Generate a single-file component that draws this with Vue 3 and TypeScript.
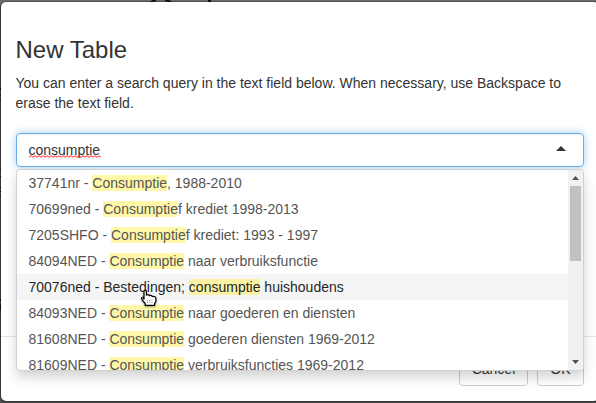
<script setup lang="ts">
import { ref } from 'vue'

interface Option {
  before: string
  match: string
  after: string
}

const query = ref('consumptie')
const active = ref(4)
const options: Option[] = [
  { before: '37741nr - ', match: 'Consumptie', after: ', 1988-2010' },
  { before: '70699ned - ', match: 'Consumptie', after: 'f krediet 1998-2013' },
  { before: '7205SHFO - ', match: 'Consumptie', after: 'f krediet: 1993 - 1997' },
  { before: '84094NED - ', match: 'Consumptie', after: ' naar verbruiksfunctie' },
  { before: '70076ned - Bestedingen; ', match: 'consumptie', after: ' huishoudens' },
  { before: '84093NED - ', match: 'Consumptie', after: ' naar goederen en diensten' },
  { before: '81608NED - ', match: 'Consumptie', after: ' goederen diensten 1969-2012' },
  { before: '81609NED - ', match: 'Consumptie', after: ' verbruiksfuncties 1969-2012' },
]
</script>

<template>
  <div class="page">
    <svg class="behind" width="596" height="403" aria-hidden="true">
      <path d="M151 2.5Q153 .5 156 0M165 0Q169 .5 171 2.5" fill="none" stroke="#111" stroke-width="2" />
      <path d="M208 0h3v2h-3zM0 88h1v2H0zM0 95h1v1H0zM0 99h1v1H0zM0 169h1v1H0zM0 176h1v1H0zM0 187h1v1H0zM0 191h1v1H0zM0 196h1v1H0zM0 299h1v2H0zM0 304h1v7H0z" fill="#111" />
    </svg>
    <div class="modal">
      <div class="body">
        <h3>New Table</h3>
        <p>You can enter a search query in the text field below. When necessary, use Backspace to erase the text field.</p>
        <div class="select">
          <div class="control">
            <span class="query">{{ query }}<svg class="spelling" width="72" height="3" aria-hidden="true">
              <defs>
                <pattern id="wave" width="4" height="3" patternUnits="userSpaceOnUse">
                  <path d="M0 2.3L2 .7L4 2.3" fill="none" stroke="#f22" stroke-width="1" />
                </pattern>
              </defs>
              <rect width="72" height="3" fill="url(#wave)" />
            </svg></span>
            <i class="caret"></i>
          </div>
          <div class="dropdown">
            <div class="options">
              <div v-for="(o, i) in options" :key="i" class="option" :class="{ active: i === active }" @mouseenter="active = i">{{ o.before }}<span class="highlight">{{ o.match }}</span>{{ o.after }}</div>
            </div>
            <div class="scrollbar">
              <svg width="15" height="16"><path d="M4 10L7.5 6L11 10Z" fill="#505050" /></svg>
              <div class="thumb"></div>
              <svg class="down" width="15" height="16"><path d="M4 6L7.5 10L11 6Z" fill="#505050" /></svg>
            </div>
          </div>
        </div>
      </div>
      <div class="footer">
        <button type="button">Cancel</button>
        <button type="button">OK</button>
      </div>
    </div>
    <svg class="pointer" width="18" height="20" viewBox="0 0 18 20" aria-hidden="true">
      <path d="M4 10.5V2.6Q4 1.3 5.2 1.3T6.4 2.6V6Q8.6 5 9.4 6.6Q11.4 5.9 12.3 7.5Q15.9 7 15.9 9.6V12.5L14.6 14.5V16.4H5.2V14.5L3 12L1.6 9.9Q1.5 7.9 3.2 8.3Z" fill="#fff" stroke="#000" stroke-width="1.2" />
      <path d="M7.5 11v3M9.7 11v3M11.9 11v3" stroke="#777" stroke-width=".8" stroke-dasharray="1 1" />
    </svg>
  </div>
</template>

<style>
body {
  overflow: hidden;
}
</style>

<style scoped>
* {
  box-sizing: border-box;
}
.page {
  position: relative;
  width: 596px;
  height: 403px;
  overflow: hidden;
  padding-top: 1px;
  background: linear-gradient(#6c6a6c, #6c6a6c 3px, #4b494b 8px);
  font: 14px/20px "Liberation Sans", Arial, sans-serif;
  color: #333;
}
.behind {
  position: absolute;
  top: 0;
  left: 0;
}
.modal {
  position: relative;
  width: 600px;
  height: 401px;
  margin-left: -0.5px;
  border: 1px solid rgba(0, 0, 0, 0.25);
  border-radius: 6px;
  background: #fff;
  background-clip: padding-box;
}
.body {
  height: 334px;
  padding: 35px 15px 0;
}
h3 {
  margin: 0 0 10px;
  font-size: 24px;
  line-height: 26px;
  font-weight: 400;
}
p {
  margin: 0 0 20px;
}
.select {
  position: relative;
}
.control {
  display: flex;
  align-items: center;
  justify-content: space-between;
  height: 34px;
  padding: 0 17px 0 12px;
  border: 1px solid #66afe9;
  border-radius: 4px;
  background: #fff;
  box-shadow: inset 0 1px 1px rgba(0, 0, 0, 0.075), 0 0 8px rgba(102, 175, 233, 0.6);
}
.query {
  position: relative;
}
.spelling {
  position: absolute;
  left: 0;
  bottom: 2px;
}
.caret {
  margin-bottom: 4px;
  border: 5px solid transparent;
  border-top: 0;
  border-bottom-color: #333;
}
.dropdown {
  position: absolute;
  z-index: 1;
  top: 36px;
  left: 0;
  display: flex;
  width: 568px;
  height: 202px;
  overflow: hidden;
  border: 1px solid #d0d0d0;
  border-radius: 4px;
  background: #fff;
  box-shadow: 0 6px 12px rgba(0, 0, 0, 0.175);
}
.options {
  flex: 1;
  overflow: hidden;
}
.option {
  height: 26px;
  padding: 3px 12px;
  color: #555;
  white-space: nowrap;
}
.option.active {
  background: #f5f5f5;
  color: #262626;
}
.highlight {
  border-radius: 1px;
  background: rgba(255, 237, 40, 0.4);
}
.scrollbar {
  display: flex;
  flex-direction: column;
  width: 15px;
  background: #f1f1f1;
}
.scrollbar svg {
  display: block;
}
.thumb {
  width: 11px;
  height: 75px;
  margin-left: 2px;
  background: #c1c1c1;
}
.down {
  margin-top: auto;
}
.footer {
  display: flex;
  justify-content: flex-end;
  gap: 9px;
  padding: 15px;
  border-top: 1px solid #e5e5e5;
}
button {
  height: 34px;
  padding: 6px 12px;
  border: 1px solid #ccc;
  border-radius: 4px;
  background: #fff;
  color: #333;
  font: inherit;
}
.pointer {
  position: absolute;
  left: 140px;
  top: 289px;
  z-index: 2;
  filter: drop-shadow(0 1px 1px rgba(0, 0, 0, 0.4));
}
</style>
